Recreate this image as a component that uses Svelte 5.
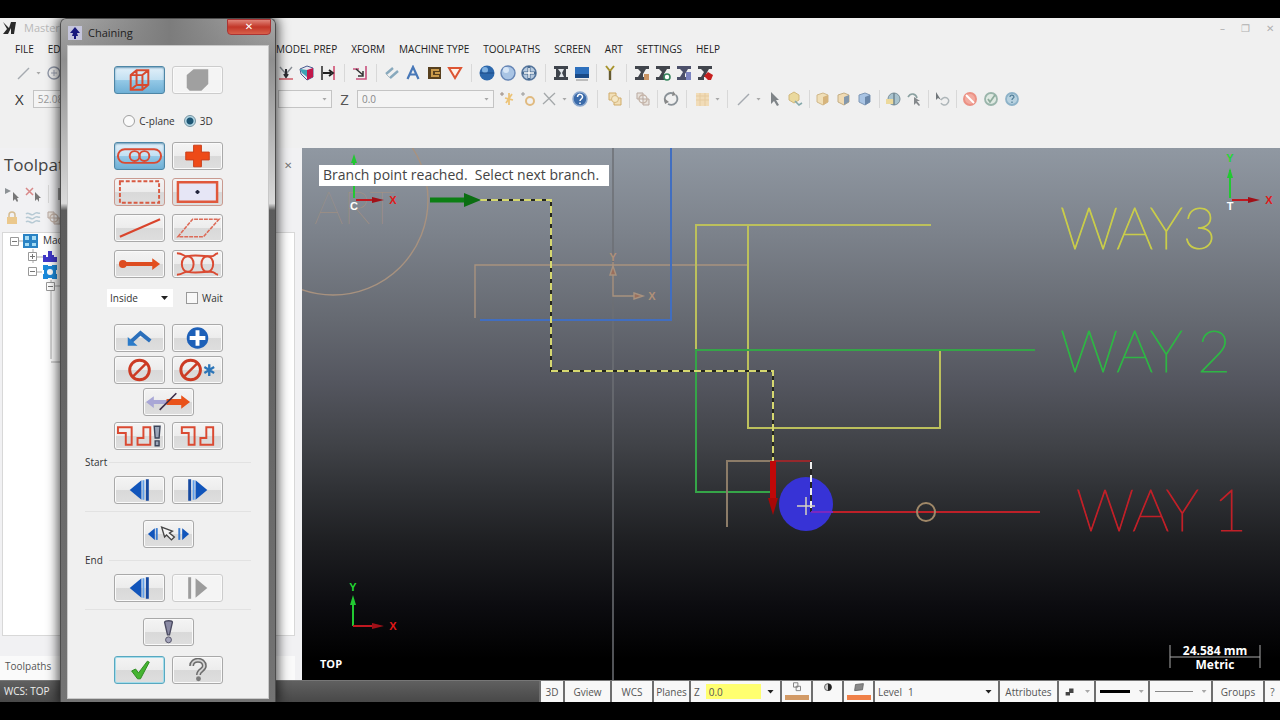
<script>
  const icons = {
    line: '<path d="M3 14 14 3" stroke="#a5aab0" stroke-width="1.4"/>',
    circle: '<circle cx="8" cy="8" r="6" fill="none" stroke="#9198a8" stroke-width="1.4"/><path d="M5 8h6M8 5v6" stroke="#9aa0b0"/>',
    trim: '<path d="M2 2 8 9M14 2 8 9" stroke="#8a8f96" stroke-width="1.4"/><path d="M8 4v8M6 9l2 3 2-3" stroke="#2d2d33" stroke-width="2" fill="none"/><path d="M1 14h14" stroke="#d0505c" stroke-width="1.4"/>',
    cubeRed: '<path d="M1 4 8 1l6 2v9l-6 3-6-6z" fill="#e8e8f0" stroke="#4a5a90"/><path d="M8 5l6-2v9l-6 3z" fill="#c2184a"/><path d="M1 4l7 1v7L3 8z" fill="#3da3b4"/>',
    dim: '<path d="M2 1v14" stroke="#333" stroke-width="1.6"/><path d="M14 1v14" stroke="#d04f72" stroke-width="1.6"/><path d="M3 8h8M9 5l4 3-4 3" stroke="#222" stroke-width="1.8" fill="none"/>',
    corner: '<path d="M1 4h6M14 1v13H4" stroke="#c9517e" stroke-width="1.6" fill="none"/><path d="M4 4l7 6M11 6v5H6" stroke="#333" stroke-width="1.5" fill="none"/>',
    ruler: '<path d="M2 9 9 3M6 13l8-7" stroke="#88a9bd" stroke-width="2.4"/><path d="M2 9l4 4" stroke="#a8bac4"/>',
    letter: '<path d="M2.5 14 8 2l5.500 12M4.500 9.500h7" stroke="#4878b8" stroke-width="2.2" fill="none"/>',
    pocket: '<path d="M2 2h13v12H2z" fill="#57401f"/><path d="M13 5H6v6h7M9 8h5" stroke="#c99a4b" stroke-width="2" fill="none"/>',
    tri: '<path d="M2 3h12L8 13z" stroke="#dd5533" stroke-width="2" fill="#fff2e8"/>',
    sphere: '<circle cx="8" cy="8" r="7.500" fill="#2d68ac"/><circle cx="6" cy="5" r="3" fill="#7fb0e0"/><path d="M1 8h14" stroke="#1c4a86"/>',
    sphereLight: '<circle cx="8" cy="8" r="7" fill="#a9c4e4" stroke="#6585b5" stroke-width="1.4"/><circle cx="6" cy="5" r="3" fill="#d6e5f6"/>',
    sphereWire: '<circle cx="8" cy="8" r="7" fill="#b7cadf" stroke="#55759c" stroke-width="1.6"/><path d="M8 1v14M1 8h14" stroke="#46698f" stroke-width="3"/><path d="M8 3v10M3 8h10" stroke="#fff" stroke-width="1.4"/>',
    mill: '<path d="M1 1h14v3H1zM1 12h14v3H1zM3 4h10v8H3z" fill="#3f444c"/><path d="M5 4h6l-2 4 2 4H6l2-4z" fill="#e2e6ea"/>',
    screen: '<path d="M1 2h14v11H1z" fill="#2e70bd"/><path d="M1 9h14v4H1z" fill="#1a4a86"/><path d="M2 15h12" stroke="#888"/>',
    tap: '<path d="M4 1l4 5 4-5" fill="none" stroke="#a8942e" stroke-width="2"/><path d="M8 6v9" stroke="#655a30" stroke-width="2.4"/>',
    millA: '<path d="M1 1h14v3h-3L9 9v3H4l3-5-3-3H1z" fill="#41454c"/><path d="M1 12h9v3H1z" fill="#41454c"/><path d="M10 9h5v6h-5z" fill="#c99464"/>',
    millB: '<path d="M1 1h14v3h-3L9 9v3H4l3-5-3-3H1z" fill="#41454c"/><path d="M1 12h9v3H1z" fill="#41454c"/><circle cx="12" cy="12" r="3" fill="#fff" stroke="#35845c" stroke-width="1.6"/>',
    millC: '<path d="M1 1h14v3h-3L9 9v3H4l3-5-3-3H1z" fill="#4c506a"/><path d="M1 12h9v3H1z" fill="#4c506a"/><path d="M10 7h5v8h-5z" fill="#7c84c0"/>',
    millD: '<path d="M1 1h14v3h-3L9 9v3H4l3-5-3-3H1z" fill="#41454c"/><path d="M1 12h6v3H1z" fill="#41454c"/><path d="M7 11l4-4 5 3-2 5h-3z" fill="#c6201f"/>',
    star: '<path d="M1 3h4M3 1v4" stroke="#9a8a80"/><path d="M10 2v12M6 7l8 2M7 12l6-9" stroke="#ecc377" stroke-width="1.8"/>',
    ring: '<path d="M1 3h4M3 1v4" stroke="#999"/><circle cx="10" cy="10" r="4" fill="none" stroke="#e0ba80" stroke-width="2"/>',
    cross: '<path d="M3 2l11 12M14 2 2 13" stroke="#a4a8aa" stroke-width="1.3"/>',
    help: '<circle cx="8" cy="8" r="7" fill="#3b6baa" stroke="#8da9cf" stroke-width="1.500"/><path d="M5.500 6c0-4 5.500-3 5 0 0 2-2.500 2-2.500 4M8 11.500v1.500" stroke="#fff" stroke-width="1.5" fill="none"/>',
    stack: '<path d="M2 2h7v7H2zM7 7h7v7H7z" fill="#f1dfb8" stroke="#d0ab68"/><circle cx="8" cy="8" r="3.500" fill="#f4e7c5" stroke="#d6b77e"/>',
    stackGray: '<path d="M2 2h6v6H2zM8 8h6v6H8z" fill="#e8e2dc" stroke="#b9a9a0"/><circle cx="8" cy="8" r="4" fill="none" stroke="#c5b4a8" stroke-width="1.4"/>',
    refresh: '<path d="M3 12C-1 5 6 0 11 3M13 4c4 6-2 12-8 9" fill="none" stroke="#8a9298" stroke-width="1.800"/><path d="M1 7l1 6 4-2M10 0l3 4-4 1" fill="#888"/>',
    grid: '<path d="M2 2h13v13H2z" fill="#f1dcb8"/><path d="M2 5h13M2 9h13M6 2v13M11 2v13" stroke="#e6cba0"/>',
    pointer: '<path d="M5 1v12l3-3 3 5 2-1-3-5h3z" fill="#7f8488"/>',
    chain: '<path d="M2 4l5-3 5 3v5l-5 3-5-3z" fill="#ead99e" stroke="#d1b87c"/><path d="M8 10l4 4 3-2" stroke="#86a9ab" stroke-width="1.600" fill="none"/>',
    cubeA: '<path d="M2 4l6-2 5 2v7l-5 3-6-3z" fill="#f0dfb8" stroke="#d0b88a"/><path d="M8 6l5-2v7l-5 3z" fill="#d6b47c"/>',
    cubeB: '<path d="M2 4l6-2 5 2v7l-5 3-6-3z" fill="#f0dbb4" stroke="#c4ae84"/><path d="M8 6l5-2v7l-5 3z" fill="#8498ac"/>',
    cubeC: '<path d="M2 4l6-2 5 2v7l-5 3-6-3z" fill="#a9c4e4" stroke="#7f98b6"/><path d="M8 6l5-2v7l-5 3z" fill="#6a87aa"/>',
    globe: '<circle cx="9" cy="8" r="6" fill="#a9c3ce" stroke="#7a909a"/><path d="M1 8h8v5H1z" fill="#ecd99c"/><path d="M9 2v12" stroke="#6f8490" stroke-width="1.5"/>',
    undo: '<path d="M2 6c3-5 8-3 9 1" fill="none" stroke="#8aa0a0" stroke-width="1.600"/><path d="M8 6v8l2-2 3 3 1-1-3-4h3z" fill="#85898c"/>',
    lasso: '<path d="M2 1v8l2-2 3 2z" fill="#70767a"/><path d="M7 9c4-6 11 0 6 4-2 2-5 1-6-1" fill="none" stroke="#adb5b8" stroke-width="1.500"/>',
    no: '<circle cx="8" cy="8" r="6" fill="#f3aba0" stroke="#eb9184" stroke-width="2"/><path d="M4 4l8 8" stroke="#fff" stroke-width="2"/>',
    ok: '<circle cx="8" cy="8" r="6" fill="#dfe9e2" stroke="#9ab5ab" stroke-width="1.800"/><path d="M5 8l2 3 5-7" stroke="#8eac9d" stroke-width="1.800" fill="none"/>',
    info: '<circle cx="8" cy="8" r="6" fill="#b8d2e0" stroke="#8db2c8" stroke-width="1.800"/><path d="M6 6c0-3 4-2 4 0 0 1-2 1-2 3M8 10.500v1.500" stroke="#55809a" stroke-width="1.3" fill="none"/>',
    lock: '<path d="M5 7V5a3 3 0 0 1 6 0v2" fill="none" stroke="#d5bc92" stroke-width="1.500"/><path d="M3 7h10v7H3z" fill="#ebc88c"/>',
    waves: '<path d="M1 4c3-3 5 3 8 0s4 0 6-1M1 8c3-3 5 3 8 0s4 0 6-1M1 12c3-3 5 3 8 0s4 0 6-1" fill="none" stroke="#b7cad4" stroke-width="1.500"/>',
    selAll: '<path d="M1 2l6 3-6 3z" fill="#8d9296"/><path d="M9 6v9l2-2 2 3 1-1-1-3h2z" fill="#777"/>',
    selNone: '<path d="M1 2l7 7M8 2 1 9" stroke="#d88888" stroke-width="1.500"/><path d="M10 6v9l2-2 2 3v-4h2z" fill="#777"/>',
    tools: '<path d="M3 2v12M8 2v12M13 2v12" stroke="#999" stroke-width="2"/>',

    wire: '<path d="M15 7l6-5h12v15l-6 5H15zM15 7h12v15M27 7l6-5M21 2v15h12M21 17l-6 5" fill="none" stroke="#d8492e" stroke-width="2"/>',
    solid: '<path d="M13 7l7-6h15v15l-7 7H16l-3-3z" fill="#a0a0a0"/>',
    chainLink: '<rect x="2" y="5" width="44" height="14" rx="7"/><circle cx="19" cy="12" r="5"/><circle cx="29" cy="12" r="5"/>',
    plus: '<path d="M20 1h8v7h8v8h-8v7h-8v-7h-8V8h8z" fill="#ee4a18" stroke="#c9401c"/>',
    window: '<path d="M4 1h40v22H4z" fill="none" stroke="#d85a42" stroke-width="2" stroke-dasharray="4 2"/>',
    area: '<path d="M4 2h40v20H4z" fill="#e6e6f6" stroke="#e0583c" stroke-width="2.500"/><path d="M22 12h4M24 10v4" stroke="#22243c" stroke-width="2"/>',
    single: '<path d="M4 21 45 3" stroke="#d9442c" stroke-width="2.200"/>',
    polygon: '<path d="M4 21 19 3h27L30 21z" fill="none" stroke="#dc6b58" stroke-width="1.6" stroke-dasharray="4 1"/>',
    vector: '<path d="M7 12h33" stroke="#dd4c20" stroke-width="4"/><circle cx="7" cy="12" r="4" fill="#dd4c20"/><path d="M37 6l8 6-8 6z" fill="#e3501f"/>',
    partial: '<ellipse cx="14" cy="12" rx="6" ry="8"/><ellipse cx="34" cy="12" rx="6" ry="8"/><path d="M3 1c7 0 7 4 11 3s10-1 20 0 5-2 11-3M3 23c7 0 7-4 11-3s10 1 20 0 5 2 11 3"/>',
    back: '<path d="M15 16 25 7l10 8" fill="none" stroke="#2b6fbb" stroke-width="4"/><path d="M12 11v9h10z" fill="#2b7bc9"/>',
    add: '<circle cx="24" cy="12" r="11" fill="#1d60b8"/><path d="M24 4v16M16 12h16" stroke="#fff" stroke-width="4"/>',
    ban: '<circle cx="24" cy="12" r="10" fill="none" stroke="#cc3b24" stroke-width="3"/><path d="M17 19 31 5" stroke="#cc3b24" stroke-width="2.500"/>',
    banAll: '<circle cx="17" cy="12" r="10" fill="none" stroke="#cc3b24" stroke-width="3"/><path d="M10 19 24 5" stroke="#cc3b24" stroke-width="2.500"/><path d="M36 6v12M31 9l10 6M41 9l-10 6" stroke="#2c75b8" stroke-width="2.400"/>',
    reverse: '<path d="M1 12l8-6v4h15v4H9v4z" fill="#a9a7d6"/><path d="M46 12l-9-7v4H22v6h15v4z" fill="#e9521a"/><path d="M15 20 32 3" stroke="#3c2c48" stroke-width="1.600"/>',
    steps: '<path d="M2 3h14v18h-6V9H2zM22 21V14h6V3h7v18z"/><path d="M39 2h6l-1 12h-4zM40 17h4v5h-4z" fill="#9aa5b8" stroke="#3b4458" stroke-width="1.400"/>',
    stepsEnd: '<path d="M8 3h13v18h-6V9H8zM27 21v-7h6V3h7v18z"/>',
    prev: '<path d="M14 12 26 2v20z" fill="#1155bb"/><path d="M28 2v20" stroke="#62a0ea" stroke-width="2"/><path d="M32 1v22" stroke="#174aa0" stroke-width="3"/>',
    next: '<path d="M34 12 22 2v20z" fill="#1155bb"/><path d="M20 2v20" stroke="#62a0ea" stroke-width="2"/><path d="M16 1v22" stroke="#174aa0" stroke-width="3"/>',
    nextOff: '<path d="M34 12 22 2v20z" fill="#9c9c9c"/><path d="M16 1v22" stroke="#9c9c9c" stroke-width="3"/>',
    pick: '<path d="M3 12l7-6v12z" fill="#1155bb"/><path d="M12 6v12" stroke="#3a7cd0" stroke-width="2"/><path d="M45 12l-7-6v12z" fill="#1155bb"/><path d="M35 6v12" stroke="#3a7cd0" stroke-width="2"/><path d="M17 5l3 10 2-2 5 5 3-3-5-4 3-2z" fill="#f4f4f4" stroke="#444" stroke-width="1.400"/>',
    bang: '<path d="M20 2c0-2 8-2 8 0l-3 13h-2z" fill="#8a8aa4" stroke="#4c4c62" stroke-width="1.400"/><circle cx="24" cy="20" r="3" fill="#a5a5bb" stroke="#55556a"/>',
    check: '<path d="M16 13l4-2 3 4L32 3l2 1-9 17h-3z" fill="#45b431" stroke="#2d8a20"/>',
    query: '<path d="M18 8c0-8 13-8 13 0 0 4-6 4-6 9" fill="none" stroke="#6c6c6c" stroke-width="5"/><path d="M18 8c0-8 13-8 13 0 0 4-6 4-6 9" fill="none" stroke="#d4d4d4" stroke-width="2"/><circle cx="25" cy="21" r="2.500" fill="#7a7a7a"/>'
  };

  const mainBar = ['trim', 'cubeRed', 'dim', '|', 'corner', '|', 'ruler', 'letter', 'pocket', 'tri', '|', 'sphere', 'sphereLight', 'sphereWire', '|', 'mill', 'screen', '!', 'tap', '|', 'millA', 'millB', 'millC', 'millD'];
  const snapBar = ['star', 'ring', 'cross', '.', 'help', '||', 'stack', '!', 'stackGray', '!', 'refresh', '|', 'grid', '.', '|', 'line', '.', 'pointer', 'chain', '!', 'cubeA', 'cubeB', 'cubeC', '!', 'globe', 'undo', '!', 'lasso', '!', 'no', 'ok', 'info'];
  const menus = ['MODEL PREP', 'XFORM', 'MACHINE TYPE', 'TOOLPATHS', 'SCREEN', 'ART', 'SETTINGS', 'HELP'];
  const methods = [
    ['chainLink', 'Chain', 'on red'], ['plus', 'Point', ''],
    ['window', 'Window', 'pinkish'], ['area', 'Area', 'pinkish'],
    ['single', 'Single', ''], ['polygon', 'Polygon', ''],
    ['vector', 'Vector', ''], ['partial', 'Partial', 'red']
  ];

  let plane = $state('3D');
  let wait = $state(false);
</script>

{#snippet glyph(name)}
  <svg class="glyph" viewBox="0 0 16 16" aria-hidden="true">{@html icons[name]}</svg>
{/snippet}

{#snippet tool(name)}
  {#if name === '|'}<i class="sep"></i>
  {:else if name === '||'}<i class="sep wide"></i>
  {:else if name === '!'}<i class="sep tight"></i>
  {:else if name === '.'}<i class="drop"></i>
  {:else}<button class="tool" aria-label={name}>{@render glyph(name)}</button>{/if}
{/snippet}

{#snippet push(name, label, cls = '', off = false)}
  <button class="push {cls}" aria-label={label} disabled={off}>
    <svg viewBox="0 0 48 24" aria-hidden="true">{@html icons[name]}</svg>
  </button>
{/snippet}

<div class="frame">
  <div class="app">
    <header>
      <div class="title">
        <svg class="glyph" viewBox="0 0 16 16"><path d="M1 2l6 6 2-6h5l-2 12H9V8l-3 6H1l4-5z" fill="#2a2a2a" /></svg>
        <span>Mastercam</span>
        <div class="wincontrols"><button aria-label="Minimize">–</button><button aria-label="Restore">❐</button><button aria-label="Close">✕</button></div>
      </div>
      <nav>
        <div class="under"><a href="#file">FILE</a><a href="#edit">EDIT</a></div>
        {#each menus as m}<a href="#menu">{m}</a>{/each}
      </nav>
      <div class="bar main">
        <div class="under">{@render tool('line')}{@render tool('.')}{@render tool('circle')}</div>
        {#each mainBar as n}{@render tool(n)}{/each}
      </div>
      <div class="bar">
        <div class="under coords"><label for="cx">X</label><input id="cx" value="52.0875" /></div>
        <div class="ybox"><i class="drop"></i></div>
        <label class="zlabel" for="cz">Z</label>
        <div class="zbox"><input id="cz" value="0.0" /><i class="drop"></i></div>
        {#each snapBar as n}{@render tool(n)}{/each}
      </div>
    </header>

    <main>
      <aside>
        <div class="phead"><h2>Toolpaths</h2><button aria-label="Close panel">✕</button></div>
        <div class="picons">{@render tool('selAll')}{@render tool('selNone')}<i class="sep"></i>{@render tool('tools')}</div>
        <div class="picons">{@render tool('lock')}{@render tool('waves')}{@render tool('stackGray')}</div>
        <div class="tree">
          <svg viewBox="0 0 70 136" aria-hidden="true">
            <path d="M11 8h10M30 16v14M30 24h10M30 39h12M48 46v80M48 53h12M48 129h16" fill="none" stroke="#aaa" />
            <g fill="#fff" stroke="#999"><path d="M7.500 4.500h8v8h-8zM25.500 19.500h8v8h-8zM25.500 34.500h8v8h-8zM43.500 49.500h8v8h-8z" /></g>
            <path d="M9 8.500h5M27 23.500h5M29.500 21v5M27 38.500h5M45 53.500h5" stroke="#777" />
            <path d="M20 1h15v14H20z" fill="#2a83c4" /><path d="M22 3h4v4h-4zM29 3h4v4h-4zM22 10h4v3h-4zM29 10h4v3h-4z" fill="#a6dcf4" />
            <path d="M40 29v-7h3v2h2v-6h4v4h2v2h3v5z" fill="#4038c8" />
            <path d="M40 32h14v14H40z" fill="#1c8adb" /><circle cx="47" cy="39" r="3" fill="#fff" /><path d="M40 37v4M54 37v4M45 32h4M45 46h4" stroke="#fff" stroke-width="2" />
          </svg>
          <span>Machine Group-1</span>
        </div>
        <div class="tab">Toolpaths</div>
      </aside>

      <section class="view">
        <svg viewBox="302 148 978 532" preserveAspectRatio="xMinYMin slice" fill="none">
          <path d="M613 148V680" stroke="#6c6f74" stroke-width="1.500" />
          <g stroke="#a8927f" stroke-width="1.400">
            <circle cx="333" cy="200" r="95" />
            <path d="M475 318V265H748" />
            <path d="M613 262V296H642" /><path d="M634 293l9 3-9 3zM610 275l3-9 3 9z" fill="#9a6f5c" />
          </g>
          <text class="cad art" x="314" y="224" font-size="46">ART</text>
          <text class="axis" x="613" y="261" fill="#b09078">Y</text><text class="axis" x="652" y="300" fill="#b09078">X</text>
          <path d="M671 148V320H480" stroke="#416ec0" stroke-width="2" />
          <g stroke="#bcc05c" stroke-width="2">
            <path d="M931 225H696V349M748 225V428H940V350" />
          </g>
          <path d="M1035 350H696V492H773" stroke="#35a548" stroke-width="2" />
          <path d="M727 527V461H773" stroke="#8c7c68" stroke-width="2" /><path d="M773 461H811" stroke="#96282c" stroke-width="2" />
          <path d="M480 200H551V371H773V461" stroke="#24261c" stroke-width="2" />
          <path d="M480 200H551V371H773V461" stroke="#d6d870" stroke-width="2" stroke-dasharray="7 4" />
          <path d="M430 200H465" stroke="#0c7f14" stroke-width="5" /><path d="M464 193l17 7-17 7z" fill="#0b6e12" />
          <path d="M773 461V500" stroke="#c00808" stroke-width="6" /><path d="M768 498h10l-5 17z" fill="#a80808" />
          <path d="M811 512H1040" stroke="#bd2028" stroke-width="2" />
          <circle cx="926" cy="512" r="9" stroke="#a08868" stroke-width="2" />
          <circle cx="806" cy="504" r="27" fill="#3733d6" />
          <path d="M811 461V512" stroke="#222" stroke-width="2" /><path d="M811 462V512" stroke="#eee" stroke-width="2" stroke-dasharray="7 6" />
          <path d="M811 512H833" stroke="#7a28c0" stroke-width="2" />
          <path d="M797 506H815M806 497V515" stroke="#d8d4c0" stroke-width="1.500" />

          <g stroke-width="2">
            <path d="M354 198V160M1230 198V170M353 626V600" stroke="#22c832" />
            <path d="M351 163l3-9 3 9zM1227 178l3-10 3 10zM350 605l3-10 3 10z" fill="#22c832" />
            <path d="M356 200H374M1232 200H1250M353 626H374" stroke="#c01820" />
            <path d="M372 197l12 3-12 3zM1248 197l12 3-12 3zM372 623l12 3-12 3z" fill="#a01018" />
          </g>
          <g class="axis">
            <text x="393" y="204" fill="#e01818">X</text><text x="1269" y="204" fill="#e01818">X</text><text x="393" y="630" fill="#e01818">X</text>
            <text x="353" y="591" fill="#22d832">Y</text><text x="1230" y="162" fill="#22d832">Y</text>
            <text x="354" y="210" fill="#fff">C</text><text x="1230" y="210" fill="#fff">T</text>
          </g>
          <g class="cad" font-size="58">
            <text x="1060" y="249" fill="#c9cc4a" stroke="#c9cc4a">WAY3</text>
            <text x="1060" y="372" fill="#2fb545" stroke="#2fb545">WAY 2</text>
            <text x="1076" y="531" fill="#c02028" stroke="#c02028">WAY 1</text>
          </g>
          <text class="label" x="320" y="668" fill="#fff">TOP</text>
          <path d="M1170 645V668M1260 645V668M1170 657H1260" stroke="#aaa" />
          <text class="label mid" x="1215" y="655" fill="#fff">24.584 mm</text>
          <text class="label mid" x="1215" y="669" fill="#fff">Metric</text>
        </svg>
        <div class="prompt">Branch point reached.&nbsp; Select next branch.</div>
      </section>
    </main>

    <footer>
      <div class="wcs">WCS: TOP</div>
      <button class="c22">3D</button><button class="c45">Gview</button><button class="c40">WCS</button><button class="c35">Planes</button>
      <div class="zcell"><label for="sz">Z</label><input id="sz" value="0.0" /><i class="caret"></i></div>
      <button class="swatch" aria-label="Wireframe colour"><svg class="glyph" viewBox="0 0 16 16"><path d="M4 2h5v5H4zM7 6h5v5H7z" fill="none" stroke="#777" /></svg><i class="tan"></i></button>
      <button class="swatch" aria-label="Solid colour"><svg class="glyph" viewBox="0 0 16 16"><circle cx="8" cy="7" r="4" fill="#ccc" stroke="#555" /><path d="M8 3a4 4 0 0 1 0 8z" fill="#222" /></svg></button>
      <button class="swatch" aria-label="Surface colour"><svg class="glyph" viewBox="0 0 16 16"><path d="M4 4l9-1-1 7-9 1z" fill="#888" stroke="#666" /></svg><i class="orange"></i></button>
      <div class="level"><label for="lv">Level</label><input id="lv" value="1" /><i class="caret"></i></div>
      <button class="c57">Attributes</button>
      <button class="c35 pair" aria-label="Point style"><svg viewBox="0 0 16 16"><path d="M3 12V8h4V4h5v5H8v3z" fill="#444" /></svg><i class="drop"></i></button>
      <button class="c52 pair" aria-label="Line width"><b class="thick"></b><i class="drop"></i></button>
      <button class="c61 pair" aria-label="Line style"><b></b><i class="drop"></i></button>
      <button class="c50">Groups</button><button class="c15">?</button>
    </footer>

    <div class="dialog" role="dialog" aria-label="Chaining">
      <div class="dtitle">
        <svg viewBox="0 0 14 14"><path d="M0 0h14v14H0z" fill="#c5c5dc" /><path d="M7 1l5 6H9l1 3H8v3H6v-3H4l1-3H2z" fill="#18187c" /></svg>
        <span>Chaining</span>
        <button aria-label="Close">✕</button>
      </div>
      <div class="client">
        <div class="row">{@render push('wire', 'Wireframe', 'on')}{@render push('solid', 'Solids', '', true)}</div>
        <div class="radios">
          <label><input type="radio" bind:group={plane} value="C" />C-plane</label>
          <label><input type="radio" bind:group={plane} value="3D" />3D</label>
        </div>
        <div class="methods">{#each methods as [n, l, c]}{@render push(n, l, c)}{/each}</div>
        <div class="opts">
          <select aria-label="Area selection"><option>Inside</option></select><i class="caret"></i>
          <label><input type="checkbox" bind:checked={wait} />Wait</label>
        </div>
        <div class="edit">
          <div class="row">{@render push('back', 'Last')}{@render push('add', 'End chain')}</div>
          <div class="row">{@render push('ban', 'Unselect')}{@render push('banAll', 'Unselect all')}</div>
          <div class="row">{@render push('reverse', 'Reverse')}</div>
        </div>
        <div class="row feature">{@render push('steps', 'Chain feature options', 'steps')}{@render push('stepsEnd', 'Chain feature', 'steps')}</div>
        <div class="group" role="group" aria-label="Start">
          <span>Start</span>
          <div class="row">{@render push('prev', 'Start back')}{@render push('next', 'Start forward')}</div>
        </div>
        <div class="row after">{@render push('pick', 'Dynamic')}</div>
        <div class="group" role="group" aria-label="End">
          <span>End</span>
          <div class="row">{@render push('prev', 'End back')}{@render push('nextOff', 'End forward', '', true)}</div>
        </div>
        <div class="row after">{@render push('bang', 'Options')}</div>
        <div class="row last">{@render push('check', 'OK', 'default')}{@render push('query', 'Help')}</div>
      </div>
    </div>
  </div>
</div>

<style>
  :global(body) { margin: 0; background: #000; }
  .frame { box-sizing: border-box; min-height: 100vh; padding: 18px 0; display: flex; background: #000; font: 11px/14px "Open Sans", "Noto Sans", sans-serif; color: #333; overflow: hidden; }
  .app { position: relative; flex: 1; min-width: 0; display: flex; flex-direction: column; background: #f0f0f0; }
  button, input, select { font: inherit; color: inherit; margin: 0; padding: 0; border: 0; background: none; border-radius: 0; }
  i { font-style: normal; }
  .glyph { width: 16px; height: 16px; display: block; flex: none; }
  header { height: 130px; flex: none; overflow: hidden; }
  .title { height: 20px; display: flex; align-items: center; gap: 6px; padding: 0 6px 0 2px; color: #b8b8b8; }
  .wincontrols { margin-left: auto; display: flex; gap: 16px; color: #b0b0b0; font-size: 10px; }
  nav { height: 22px; display: flex; align-items: center; gap: 14px; font-size: 10px; }
  nav a { color: #222; text-decoration: none; white-space: nowrap; }
  .under { width: 266px; flex: none; display: flex; align-items: center; gap: 14px; padding-left: 15px; box-sizing: border-box; margin-right: -4px; }
  .bar { height: 26px; display: flex; align-items: center; gap: 5px; }
  .bar .under { width: 277px; gap: 5px; margin-right: -4px; }
  .bar .coords { font-size: 15px; }
  .coords input { width: 180px; height: 16px; border: 1px solid #c4c4c4; padding-left: 4px; margin-left: 4px; font-size: 10px; color: #999; }
  .coords input, .zbox, .ybox { background: #f4f4f4; }
  .tool { width: 16px; height: 16px; flex: none; }
  .sep { width: 5px; height: 18px; flex: none; background: linear-gradient(#d8d8d8, #d8d8d8) center / 1px 100% no-repeat; }
  .main .sep { width: 6px; }
  .sep.wide { width: 9px; }
  .sep.tight { width: 2px; }
  .drop { width: 5px; height: 3px; flex: none; background: #a8a8a8; clip-path: polygon(0 0, 100% 0, 50% 100%); }
  .ybox, .zbox { box-sizing: border-box; height: 18px; border: 1px solid #c4c4c4; display: flex; align-items: center; justify-content: flex-end; padding: 0 4px; }
  .ybox { width: 54px; flex: none; }
  .zlabel { width: 15px; text-align: center; font-size: 15px; color: #555; flex: none; }
  .zbox { width: 137px; flex: none; }
  .zbox input { flex: 1; min-width: 0; font-size: 10px; color: #888; }
  main { flex: 1; display: flex; min-height: 532px; }
  aside { width: 302px; flex: none; box-sizing: border-box; display: flex; flex-direction: column; padding-right: 7px; background: #f1f1f3; }
  .phead { height: 34px; display: flex; align-items: center; justify-content: space-between; padding-left: 4px; }
  h2 { margin: 0; font: 17px/24px "Open Sans", sans-serif; color: #444; }
  .phead button { width: 14px; font-size: 10px; color: #777; }
  .picons { height: 24px; display: flex; align-items: center; gap: 5px; padding-left: 4px; }
  .tree { flex: 1; margin: 2px 0 0 2px; border: 1px solid #d8d8d8; background: #fff; display: flex; font-size: 10px; }
  .tree svg { width: 70px; height: 136px; margin-right: -30px; flex: none; }
  .tab { height: 24px; margin-top: 20px; padding-left: 5px; line-height: 20px; font-size: 10px; color: #555; background: #fafafa; }
  .view { position: relative; flex: 1; min-width: 0; background: linear-gradient(#9098a2 0, #7c828b 16%, #666a72 32%, #54565f 44%, #404247 56%, #303236 64%, #1e1f22 74%, #0c0c10 86%, #000 96%); }
  .view svg { position: absolute; inset: 0; width: 100%; height: 100%; }
  .cad { font-family: Lato, sans-serif; font-weight: 100; stroke-width: 1px; }
  .art { fill: #a8927f; }
  .axis { font: bold 11px "Liberation Sans", sans-serif; text-anchor: middle; }
  .label { font: bold 11px "Open Sans", sans-serif; }
  .mid { font-size: 12px; text-anchor: middle; }
  .prompt { position: absolute; left: 17px; top: 17px; height: 21px; padding: 0 10px 0 4px; background: #fff; color: #444; font: 14px/20px "Open Sans", sans-serif; white-space: nowrap; }
  footer { height: 22px; flex: none; display: flex; gap: 2px; background: #6e6e6e; color: #555; font-size: 10px; line-height: 18px; border-top: 1px solid #777; box-sizing: border-box; }
  footer > button, footer > div { flex: none; background: #f8f8f8; overflow: hidden; white-space: nowrap; }
  footer > .wcs { flex: 1; min-width: 0; background: linear-gradient(#606060, #484848); color: #eee; padding-left: 4px; line-height: 20px; }
  .c22 { width: 22px; } .c45 { width: 45px; } .c40 { width: 40px; } .c35 { width: 35px; } .c57 { width: 57px; }
  .c52 { width: 52px; } .c61 { width: 61px; } .c50 { width: 50px; } .c15 { width: 15px; }
  .zcell, .level { display: flex; align-items: center; box-sizing: border-box; padding: 0 6px 0 3px; gap: 6px; }
  .zcell { width: 89px; } .level { width: 123px; }
  .zcell input { flex: 1; min-width: 0; height: 15px; background: #ffff70; padding-left: 3px; }
  .level input { flex: 1; min-width: 0; }
  .caret { width: 7px; height: 4px; flex: none; background: #222; clip-path: polygon(0 0, 100% 0, 50% 100%); }
  .swatch { width: 29px; display: flex; flex-direction: column; align-items: center; }
  .swatch .glyph { height: 14px; }
  .swatch i { width: 24px; height: 5px; }
  .tan { background: #d29a66; } .orange { background: #f08048; }
  .pair { display: flex; align-items: center; justify-content: space-around; }
  .pair svg { width: 14px; height: 14px; }
  .pair b { width: 30px; height: 1px; background: #888; }
  .c61 b { width: 38px; }
  .pair .thick { height: 3px; background: #000; }

  .dialog { position: absolute; left: 60px; top: 0; box-sizing: border-box; width: 216px; padding: 0 8px 4px; border: 1px solid #4c4c4c; border-width: 1px 1px 0; border-radius: 6px 6px 0 0; background: linear-gradient(#a6a6a6 0, #8f8f8f 6%, #dadada 27%, #5c5c5c 28%, #747474 100%); box-shadow: 0 0 12px 2px rgba(0, 0, 0, .7); clip-path: inset(0 -20px 0 -20px); font-size: 11px; }
  .dtitle { height: 27px; display: flex; align-items: center; gap: 6px; margin: 0 -4px 0 -1px; color: #222; background: linear-gradient(90deg, transparent, #7c7c7c 50%, transparent); }
  .dtitle svg { width: 14px; height: 14px; }
  .dtitle button { width: 44px; height: 16px; margin-left: auto; align-self: flex-start; border: 1px solid #a33; border-radius: 0 0 4px 4px; background: linear-gradient(#e08478, #c23628 50%, #d8604a); color: #fff; font: bold 10px/12px "DejaVu Sans", sans-serif; }
  .client { padding: 20px 17px 14px; margin: 0 -1px; background: #f0f0f0; box-shadow: 0 0 0 1px #c8c8c8; color: #333; }
  .row { display: flex; justify-content: center; gap: 7px; }
  .push { width: 51px; height: 28px; padding: 0 1px; box-sizing: border-box; border: 1px solid #a9a9a9; border-radius: 3px; background: linear-gradient(#f4f4f4, #ececec 50%, #d9d9d9 52%, #dedede); box-shadow: inset 0 0 0 1px #fafafa; flex: none; }
  .push svg { display: block; width: 100%; height: 24px; }
  .push:disabled { border-color: #ccc; background: #f4f4f4; }
  .on { border-color: #4d86a6; background: linear-gradient(#e2f0f9, #c2e0f2 50%, #93c8e6 52%, #6fb0d6); box-shadow: inset 0 1px 2px #6a9ab8; }
  .pinkish { border-color: #c99a90; box-shadow: none; }
  .red svg, .steps svg { fill: none; stroke: #da4a32; stroke-width: 2; }
  .default { border-color: #58a8c0; box-shadow: inset 0 0 0 1px #a4dcea; }
  .radios { height: 26px; margin: 14px 0 8px; display: flex; align-items: center; justify-content: center; gap: 9px; font-size: 10px; }
  .radios label, .opts label { display: flex; align-items: center; gap: 4px; }
  input[type="radio"] { appearance: none; width: 12px; height: 12px; border: 1px solid #a0a0a0; border-radius: 50%; background: #fafafa; }
  input[type="radio"]:checked { background: radial-gradient(#1d5674 0 3px, #b4d8e6 4px); border-color: #7492a0; }
  .methods { display: grid; grid-template-columns: 51px 51px; gap: 8px 7px; justify-content: center; }
  .opts { height: 20px; margin: 10px 0 16px; display: flex; align-items: center; padding-left: 22px; font-size: 10px; }
  .opts select { appearance: none; width: 66px; height: 18px; background: #fff; padding-left: 3px; }
  .opts .caret { margin: 0 18px 0 -12px; pointer-events: none; }
  input[type="checkbox"] { appearance: none; width: 12px; height: 12px; border: 1px solid #999; background: #f8f8f8; }
  .edit { display: flex; flex-direction: column; gap: 4px; }
  .feature { margin-top: 6px; }
  .group { margin-top: 4px; padding-bottom: 8px; background: linear-gradient(#e2e2e2, #e2e2e2) 0 8px / 100% 1px no-repeat, linear-gradient(#e2e2e2, #e2e2e2) 0 100% / 100% 1px no-repeat; }
  .group span { display: block; width: 24px; height: 16px; margin-bottom: 6px; line-height: 16px; background: #f0f0f0; font-size: 10px; }
  .after { margin-top: 8px; }
  .last { margin-top: 10px; }
</style>
